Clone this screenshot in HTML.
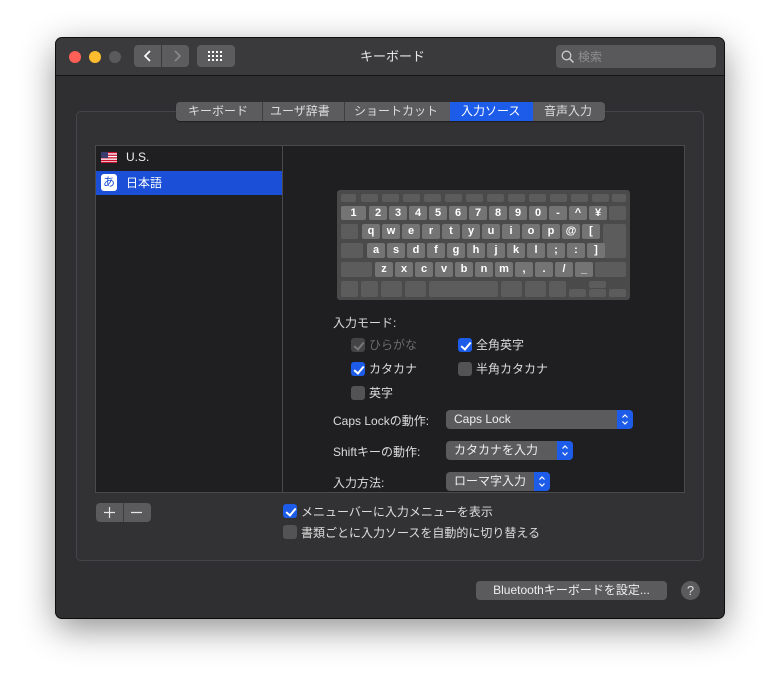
<!DOCTYPE html>
<html><head><meta charset="utf-8"><style>
*{box-sizing:border-box;margin:0;padding:0}
body{width:780px;height:693px;background:#fff;position:relative;overflow:hidden;font-family:"Liberation Sans","Noto Sans CJK JP",sans-serif;font-size:12px;color:#dcdcdc}
.a{position:absolute}
.win{left:56px;top:38px;width:668px;height:580px;background:#2f2f31;border-radius:6px;box-shadow:0 10px 35px rgba(0,0,0,.45),0 0 0 1px #111;overflow:hidden}
.tb{left:0;top:0;width:668px;height:38px;background:#3a3a3c;border-bottom:1px solid #141414}
.dot{width:12px;height:12px;border-radius:50%;top:13px}
.btn{background:#5c5c5f;border-radius:4px}
.k{position:absolute;background:#5c5c5c;border-radius:2px;color:#fff;font-weight:bold;font-size:11px;text-align:center;line-height:14px}
.l{background:#747474}
.cb{position:absolute;width:14px;height:14px;border-radius:3px;background:#535356}
.cb.on{background:#1d5ce8}
.cb.on:after{content:"";position:absolute;left:4.5px;top:1.5px;width:4px;height:8px;border:solid #fff;border-width:0 2px 2px 0;transform:rotate(40deg)}
.cb.dis{background:#444446}
.cb.dis:after{content:"";position:absolute;left:4.5px;top:1.5px;width:4px;height:8px;border:solid #777;border-width:0 2px 2px 0;transform:rotate(40deg)}
.t{position:absolute;white-space:nowrap;font-size:12px;line-height:14px}
.pop{position:absolute;height:19px;background:#5b5b5e;border-radius:4px;color:#eee;font-size:12px;line-height:19px;padding-left:8px}
.pop .ar{position:absolute;right:0;top:0;width:16px;height:19px;background:#1d5ce8;border-radius:0 4px 4px 0}
</style></head><body>
<div class="a win">
 <div class="a tb">
  <div class="a dot" style="left:13px;background:#fe5f57"></div>
  <div class="a dot" style="left:33px;background:#febc2e"></div>
  <div class="a dot" style="left:53px;background:#5a5a5c"></div>
  <div class="a btn" style="left:78px;top:7px;width:27px;height:22px;border-radius:4px 0 0 4px"></div>
  <div class="a btn" style="left:106px;top:7px;width:27px;height:22px;border-radius:0 4px 4px 0"></div>
  <svg class="a" style="left:78px;top:7px" width="56" height="22"><path d="M16 6 L11 11 L16 16" stroke="#fff" stroke-width="1.6" fill="none"/><path d="M41 6 L46 11 L41 16" stroke="#8a8a8c" stroke-width="1.6" fill="none"/></svg>
  <div class="a btn" style="left:141px;top:7px;width:38px;height:22px"></div>
  <svg class="a" style="left:152px;top:13px" width="16" height="10"><g fill="#fff"><rect x="0" y="0" width="2" height="2"/><rect x="4" y="0" width="2" height="2"/><rect x="8" y="0" width="2" height="2"/><rect x="12" y="0" width="2" height="2"/><rect x="0" y="4" width="2" height="2"/><rect x="4" y="4" width="2" height="2"/><rect x="8" y="4" width="2" height="2"/><rect x="12" y="4" width="2" height="2"/><rect x="0" y="8" width="2" height="2"/><rect x="4" y="8" width="2" height="2"/><rect x="8" y="8" width="2" height="2"/><rect x="12" y="8" width="2" height="2"/></g></svg>
  <div class="t" style="left:304px;top:12px;color:#e6e6e6;font-size:13px">キーボード</div>
  <div class="a" style="left:500px;top:7px;width:160px;height:23px;background:#59595c;border-radius:4px"></div>
  <svg class="a" style="left:505px;top:12px" width="14" height="14"><circle cx="5.5" cy="5.5" r="4.3" stroke="#ccc" stroke-width="1.3" fill="none"/><path d="M8.7 8.7 L12.5 12.5" stroke="#ccc" stroke-width="1.5"/></svg>
  <div class="t" style="left:522px;top:12px;color:#8e8e90">検索</div>
 </div>
 <div class="a" style="left:20px;top:73px;width:628px;height:450px;border:1px solid #46464a;border-radius:5px;background:#323235"></div>
 <div class="a" style="left:120px;top:64px;width:429px;height:19px;background:#5c5c5f;border-radius:4px;box-shadow:0 1px 1px rgba(0,0,0,.4)"></div>
 <div class="a" style="left:394px;top:64px;width:83px;height:19px;background:#1d5ce8"></div>
 <div class="a" style="left:206px;top:64px;width:1px;height:19px;background:#3e3e40"></div>
 <div class="a" style="left:288px;top:64px;width:1px;height:19px;background:#3e3e40"></div>
 <div class="t" style="left:132px;top:66px">キーボード</div>
 <div class="t" style="left:214px;top:66px">ユーザ辞書</div>
 <div class="t" style="left:298px;top:66px">ショートカット</div>
 <div class="t" style="left:405px;top:66px;color:#fff">入力ソース</div>
 <div class="t" style="left:488px;top:66px">音声入力</div>
 <div class="a" style="left:39px;top:107px;width:590px;height:349px;background:#1f1f22;border:1px solid #4a4a4d"></div>
 <div class="a" style="left:226px;top:108px;width:1px;height:347px;background:#4a4a4d"></div>
 <div class="a" style="left:40px;top:133px;width:186px;height:24px;background:#1b4fd8"></div>
 <svg class="a" style="left:45px;top:114px" width="16" height="11"><rect width="16" height="11" fill="#fff"/><g fill="#c8102e"><rect y="0" width="16" height="1.3"/><rect y="2.6" width="16" height="1.3"/><rect y="5.2" width="16" height="1.3"/><rect y="7.8" width="16" height="1.3"/><rect y="9.8" width="16" height="1.2"/></g><rect width="7" height="6" fill="#3c3b6e"/></svg>
 <div class="t" style="left:70px;top:112px;color:#eee">U.S.</div>
 <div class="a" style="left:45px;top:136px;width:16px;height:17px;background:#fff;border-radius:3px;color:#1b4fd8;font-size:12px;text-align:center;line-height:16px">あ</div>
 <div class="t" style="left:70px;top:138px;color:#fff">日本語</div>
</div>
<div class="a" style="left:337px;top:190px;width:293px;height:110px;background:#4a4a4a;border-radius:3px"></div>
<div class="k" style="left:341px;top:194px;width:15px;height:8px"></div>
<div class="k" style="left:361px;top:194px;width:17px;height:8px"></div>
<div class="k" style="left:382px;top:194px;width:17px;height:8px"></div>
<div class="k" style="left:403px;top:194px;width:17px;height:8px"></div>
<div class="k" style="left:424px;top:194px;width:17px;height:8px"></div>
<div class="k" style="left:445px;top:194px;width:17px;height:8px"></div>
<div class="k" style="left:466px;top:194px;width:17px;height:8px"></div>
<div class="k" style="left:487px;top:194px;width:17px;height:8px"></div>
<div class="k" style="left:508px;top:194px;width:17px;height:8px"></div>
<div class="k" style="left:529px;top:194px;width:17px;height:8px"></div>
<div class="k" style="left:550px;top:194px;width:17px;height:8px"></div>
<div class="k" style="left:571px;top:194px;width:17px;height:8px"></div>
<div class="k" style="left:592px;top:194px;width:17px;height:8px"></div>
<div class="k" style="left:612px;top:194px;width:14px;height:8px"></div>

<div class="k l" style="left:341px;top:206px;width:25px;height:14px">1</div>
<div class="k l" style="left:369px;top:206px;width:18px;height:14px">2</div>
<div class="k l" style="left:389px;top:206px;width:18px;height:14px">3</div>
<div class="k l" style="left:409px;top:206px;width:18px;height:14px">4</div>
<div class="k l" style="left:429px;top:206px;width:18px;height:14px">5</div>
<div class="k l" style="left:449px;top:206px;width:18px;height:14px">6</div>
<div class="k l" style="left:469px;top:206px;width:18px;height:14px">7</div>
<div class="k l" style="left:489px;top:206px;width:18px;height:14px">8</div>
<div class="k l" style="left:509px;top:206px;width:18px;height:14px">9</div>
<div class="k l" style="left:529px;top:206px;width:18px;height:14px">0</div>
<div class="k l" style="left:549px;top:206px;width:18px;height:14px">-</div>
<div class="k l" style="left:569px;top:206px;width:18px;height:14px">^</div>
<div class="k l" style="left:589px;top:206px;width:18px;height:14px">¥</div>
<div class="k" style="left:609px;top:206px;width:17px;height:14px"></div>

<div class="k" style="left:341px;top:224px;width:17px;height:15px"></div>
<div class="k l" style="left:362px;top:224px;width:18px;height:15px">q</div>
<div class="k l" style="left:382px;top:224px;width:18px;height:15px">w</div>
<div class="k l" style="left:402px;top:224px;width:18px;height:15px">e</div>
<div class="k l" style="left:422px;top:224px;width:18px;height:15px">r</div>
<div class="k l" style="left:442px;top:224px;width:18px;height:15px">t</div>
<div class="k l" style="left:462px;top:224px;width:18px;height:15px">y</div>
<div class="k l" style="left:482px;top:224px;width:18px;height:15px">u</div>
<div class="k l" style="left:502px;top:224px;width:18px;height:15px">i</div>
<div class="k l" style="left:522px;top:224px;width:18px;height:15px">o</div>
<div class="k l" style="left:542px;top:224px;width:18px;height:15px">p</div>
<div class="k l" style="left:562px;top:224px;width:18px;height:15px">@</div>
<div class="k l" style="left:582px;top:224px;width:18px;height:15px">[</div>
<div class="k" style="left:603px;top:224px;width:23px;height:34px"></div>

<div class="k" style="left:341px;top:243px;width:22px;height:15px"></div>
<div class="k l" style="left:367px;top:243px;width:18px;height:15px">a</div>
<div class="k l" style="left:387px;top:243px;width:18px;height:15px">s</div>
<div class="k l" style="left:407px;top:243px;width:18px;height:15px">d</div>
<div class="k l" style="left:427px;top:243px;width:18px;height:15px">f</div>
<div class="k l" style="left:447px;top:243px;width:18px;height:15px">g</div>
<div class="k l" style="left:467px;top:243px;width:18px;height:15px">h</div>
<div class="k l" style="left:487px;top:243px;width:18px;height:15px">j</div>
<div class="k l" style="left:507px;top:243px;width:18px;height:15px">k</div>
<div class="k l" style="left:527px;top:243px;width:18px;height:15px">l</div>
<div class="k l" style="left:547px;top:243px;width:18px;height:15px">;</div>
<div class="k l" style="left:567px;top:243px;width:18px;height:15px">:</div>
<div class="k l" style="left:587px;top:243px;width:18px;height:15px">]</div>

<div class="k" style="left:341px;top:262px;width:31px;height:15px"></div>
<div class="k l" style="left:375px;top:262px;width:18px;height:15px">z</div>
<div class="k l" style="left:395px;top:262px;width:18px;height:15px">x</div>
<div class="k l" style="left:415px;top:262px;width:18px;height:15px">c</div>
<div class="k l" style="left:435px;top:262px;width:18px;height:15px">v</div>
<div class="k l" style="left:455px;top:262px;width:18px;height:15px">b</div>
<div class="k l" style="left:475px;top:262px;width:18px;height:15px">n</div>
<div class="k l" style="left:495px;top:262px;width:18px;height:15px">m</div>
<div class="k l" style="left:515px;top:262px;width:18px;height:15px">,</div>
<div class="k l" style="left:535px;top:262px;width:18px;height:15px">.</div>
<div class="k l" style="left:555px;top:262px;width:18px;height:15px">/</div>
<div class="k l" style="left:575px;top:262px;width:18px;height:15px">_</div>
<div class="k" style="left:595px;top:262px;width:31px;height:15px"></div>

<div class="k" style="left:341px;top:281px;width:17px;height:16px"></div>
<div class="k" style="left:361px;top:281px;width:17px;height:16px"></div>
<div class="k" style="left:381px;top:281px;width:21px;height:16px"></div>
<div class="k" style="left:405px;top:281px;width:21px;height:16px"></div>
<div class="k" style="left:429px;top:281px;width:69px;height:16px"></div>
<div class="k" style="left:501px;top:281px;width:21px;height:16px"></div>
<div class="k" style="left:525px;top:281px;width:21px;height:16px"></div>
<div class="k" style="left:549px;top:281px;width:17px;height:16px"></div>
<div class="k" style="left:569px;top:289px;width:17px;height:8px"></div>
<div class="k" style="left:589px;top:281px;width:17px;height:7px"></div>
<div class="k" style="left:589px;top:289px;width:17px;height:8px"></div>
<div class="k" style="left:609px;top:289px;width:17px;height:8px"></div>

<div class="t" style="left:333px;top:316px">入力モード:</div>
<div class="cb dis" style="left:351px;top:338px"></div><div class="t" style="left:369px;top:338px;color:#6c6c6e">ひらがな</div>
<div class="cb on" style="left:458px;top:338px"></div><div class="t" style="left:476px;top:338px">全角英字</div>
<div class="cb on" style="left:351px;top:362px"></div><div class="t" style="left:369px;top:362px">カタカナ</div>
<div class="cb" style="left:458px;top:362px"></div><div class="t" style="left:476px;top:362px">半角カタカナ</div>
<div class="cb" style="left:351px;top:386px"></div><div class="t" style="left:369px;top:386px">英字</div>
<div class="t" style="left:333px;top:414px">Caps Lockの動作:</div>
<div class="pop" style="left:446px;top:410px;width:187px">Caps Lock<div class="ar"><svg width="16" height="19"><path d="M5.5 7.5 L8 5 L10.5 7.5 M5.5 11.5 L8 14 L10.5 11.5" stroke="#fff" stroke-width="1.2" fill="none"/></svg></div></div>
<div class="t" style="left:333px;top:445px">Shiftキーの動作:</div>
<div class="pop" style="left:446px;top:441px;width:127px">カタカナを入力<div class="ar"><svg width="16" height="19"><path d="M5.5 7.5 L8 5 L10.5 7.5 M5.5 11.5 L8 14 L10.5 11.5" stroke="#fff" stroke-width="1.2" fill="none"/></svg></div></div>
<div class="t" style="left:333px;top:476px">入力方法:</div>
<div class="pop" style="left:446px;top:472px;width:104px">ローマ字入力<div class="ar"><svg width="16" height="19"><path d="M5.5 7.5 L8 5 L10.5 7.5 M5.5 11.5 L8 14 L10.5 11.5" stroke="#fff" stroke-width="1.2" fill="none"/></svg></div></div>
<div class="a" style="left:95px;top:493px;width:590px;height:2px;background:#323235"></div>
<div class="a" style="left:95px;top:492px;width:590px;height:1px;background:#4a4a4d"></div>

<div class="a" style="left:96px;top:503px;width:55px;height:19px;background:#5b5b5e;border-radius:4px"></div>
<div class="a" style="left:123px;top:503px;width:1px;height:19px;background:#3e3e40"></div>
<svg class="a" style="left:96px;top:503px" width="55" height="19"><path d="M13.5 4 V15 M8 9.5 H19 M35 9.5 H46" stroke="#e6e6e6" stroke-width="1.2"/></svg>

<div class="cb on" style="left:283px;top:504px"></div><div class="t" style="left:301px;top:505px">メニューバーに入力メニューを表示</div>
<div class="cb" style="left:283px;top:525px"></div><div class="t" style="left:301px;top:526px">書類ごとに入力ソースを自動的に切り替える</div>

<div class="a" style="left:476px;top:581px;width:191px;height:19px;background:#5b5b5e;border-radius:4px;text-align:center;line-height:19px;color:#eee">Bluetoothキーボードを設定...</div>
<div class="a" style="left:681px;top:581px;width:19px;height:19px;border-radius:50%;background:#5b5b5e;text-align:center;line-height:19px;color:#ddd;font-size:13px">?</div>
</body></html>
